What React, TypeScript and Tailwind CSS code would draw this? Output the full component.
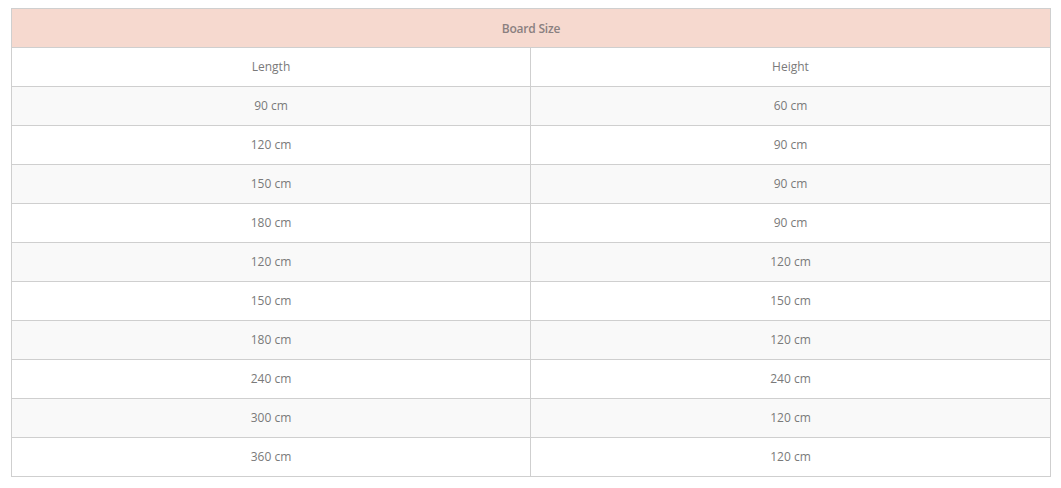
import React from "react";

const rows: [string, string][] = [
  ["90 cm", "60 cm"],
  ["120 cm", "90 cm"],
  ["150 cm", "90 cm"],
  ["180 cm", "90 cm"],
  ["120 cm", "120 cm"],
  ["150 cm", "150 cm"],
  ["180 cm", "120 cm"],
  ["240 cm", "240 cm"],
  ["300 cm", "120 cm"],
  ["360 cm", "120 cm"],
];

export default function App() {
  return (
    <div className="bg-white w-[1061px] h-[488px] pt-[8px] pl-[11px]" style={{ fontFamily: '"Open Sans", sans-serif' }}>
      <div className="w-[1040px] border border-[#cfcfcf] flex flex-col text-[12px] text-[#7a7a7a]">
        <div className="h-[38px] pt-[2px] bg-[#f6d9cf] flex items-center justify-center font-semibold text-[12px] tracking-[-0.2px] text-[#8a8080]">
          Board Size
        </div>
        <div className="h-[39px] border-t border-[#cfcfcf] bg-white grid grid-cols-[519px_1fr]">
          <div className="flex items-center justify-center border-r border-[#cfcfcf]">Length</div>
          <div className="flex items-center justify-center">Height</div>
        </div>
        {rows.map((r, i) => (
          <div
            key={i}
            className={`h-[39px] border-t border-[#cfcfcf] grid grid-cols-[519px_1fr] ${i % 2 === 0 ? "bg-[#f9f9f9]" : "bg-white"}`}
          >
            <div className="flex items-center justify-center border-r border-[#cfcfcf]">{r[0]}</div>
            <div className="flex items-center justify-center">{r[1]}</div>
          </div>
        ))}
      </div>
    </div>
  );
}
